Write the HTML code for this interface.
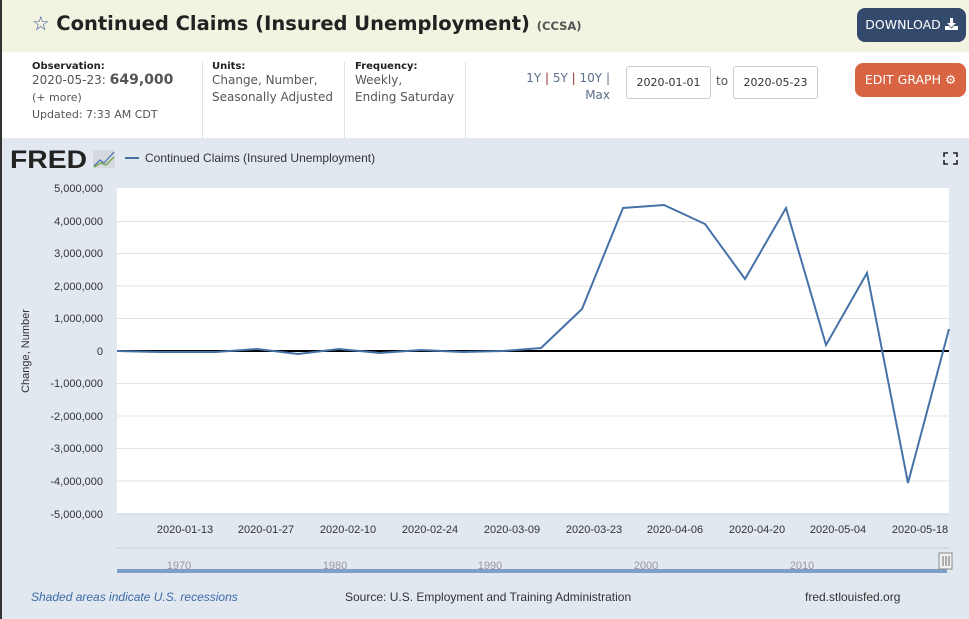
<!DOCTYPE html>
<html><head><meta charset="utf-8"><style>
*{margin:0;padding:0;box-sizing:border-box}
body{width:969px;height:619px;overflow:hidden;font-family:"DejaVu Sans","Liberation Sans",sans-serif;background:#fff;position:relative}
.hdr{position:absolute;left:0;top:0;width:969px;height:52px;background:#f2f3e0;border-left:2px solid #333}
.title{position:absolute;left:30px;top:12px;font-size:19.5px;font-weight:bold;color:#222}
.title small{font-size:11.5px;color:#555}
.btn{position:absolute;color:#fff;font-size:12.5px;border-radius:8px;text-align:center;line-height:34px}
.info{position:absolute;top:52px;left:0;width:969px;height:86px;background:#fff;border-left:2px solid #333}
.lbl{font-size:10px;font-weight:bold;color:#222}
.v{font-size:12px;color:#555;line-height:17px}
.col{position:absolute;top:9px}
.sep{position:absolute;top:10px;width:1px;height:76px;background:#dde4ec}
.inp{position:absolute;top:14px;height:33px;border:1px solid #ccc;border-radius:3px;font-size:11px;color:#333;text-align:center;line-height:31px}
.chart{position:absolute;top:138px;left:0;width:969px;height:481px;background:#e1e8f0;border-left:2px solid #333}
svg text{font-family:"Liberation Sans",sans-serif}
</style></head><body>
<div class="hdr">
<div class="title"><span style="color:#3b5a9a;font-weight:normal">☆</span> Continued Claims (Insured Unemployment) <small>(CCSA)</small></div>
<div class="btn" style="left:855px;top:8px;width:109px;background:#344a6c">DOWNLOAD <svg width="13" height="12" viewBox="0 0 13 12" style="vertical-align:-1px"><path d="M5 0h3v5h3l-4.5 4.5L2 5h3z M0 8h4l2.5 2.5L9 8h4v4H0z" fill="#fff"/></svg></div>
</div>
<div class="info">
<div class="col" style="left:30px"><div class="lbl">Observation:</div><div class="v">2020-05-23: <b style="font-size:14px">649,000</b></div><div class="v" style="font-size:11px">(+ more)</div><div class="v" style="font-size:11px">Updated: 7:33 AM CDT</div></div>
<div class="sep" style="left:200px"></div>
<div class="col" style="left:210px"><div class="lbl">Units:</div><div class="v">Change, Number,<br>Seasonally Adjusted</div></div>
<div class="sep" style="left:342px"></div>
<div class="col" style="left:353px"><div class="lbl">Frequency:</div><div class="v">Weekly,<br>Ending Saturday</div></div>
<div class="sep" style="left:463px"></div>
<div class="v" style="position:absolute;left:500px;top:18px;width:108px;text-align:right;color:#5a6f8a">1Y <span style="color:#933">|</span> 5Y <span style="color:#933">|</span> 10Y |<br>Max</div>
<div class="inp" style="left:624px;width:85px">2020-01-01</div>
<div class="v" style="position:absolute;left:714px;top:21px">to</div>
<div class="inp" style="left:731px;width:85px">2020-05-23</div>
<div class="btn" style="left:853px;top:11px;width:111px;background:#d96443">EDIT GRAPH ⚙</div>
</div>
<div class="chart"></div>
<svg width="969" height="619" style="position:absolute;left:0;top:0">
<text x="10" y="168" font-size="25" font-weight="bold" fill="#222" textLength="77" lengthAdjust="spacingAndGlyphs">FRED</text>
<rect x="93" y="150" width="22" height="18" fill="#d5d9dd"/>
<polyline points="94,166 100,160 104,163 114,152" fill="none" stroke="#4a76b0" stroke-width="1.3"/>
<polyline points="94,167 101,163 106,165 114,157" fill="none" stroke="#79a34a" stroke-width="1.3"/>
<line x1="125" y1="158" x2="139" y2="158" stroke="#4572a7" stroke-width="2"/>
<text x="145" y="162" font-size="12" fill="#333">Continued Claims (Insured Unemployment)</text>
<path d="M944 157v-4h4M953 153h4v4M957 160v4h-4M948 164h-4v-4" fill="none" stroke="#222" stroke-width="1.6"/>
<rect x="117" y="188" width="832" height="326" fill="#fff"/>
<g stroke="#e3e3e3" stroke-width="1">
<line x1="117" x2="949" y1="221.5" y2="221.5"/><line x1="117" x2="949" y1="253.5" y2="253.5"/><line x1="117" x2="949" y1="286" y2="286"/><line x1="117" x2="949" y1="318.5" y2="318.5"/><line x1="117" x2="949" y1="383.5" y2="383.5"/><line x1="117" x2="949" y1="416" y2="416"/><line x1="117" x2="949" y1="448.5" y2="448.5"/><line x1="117" x2="949" y1="481" y2="481"/>
</g>
<line x1="117" x2="949" y1="514" y2="514" stroke="#c8d3e0"/>
<line x1="117" x2="949" y1="351" y2="351" stroke="#000" stroke-width="2"/>
<g font-size="11" fill="#333" text-anchor="end">
<text x="103" y="192">5,000,000</text><text x="103" y="225">4,000,000</text><text x="103" y="257">3,000,000</text><text x="103" y="290">2,000,000</text><text x="103" y="322">1,000,000</text><text x="103" y="355">0</text><text x="103" y="387">-1,000,000</text><text x="103" y="420">-2,000,000</text><text x="103" y="452">-3,000,000</text><text x="103" y="485">-4,000,000</text><text x="103" y="518">-5,000,000</text>
</g>
<text transform="translate(29,351) rotate(-90)" font-size="11" fill="#333" text-anchor="middle">Change, Number</text>
<polyline fill="none" stroke="#4572a7" stroke-width="2" points="117,351 158,352 216,352 257,349 298,354 339,349 380,353 421,350 462,352 503,351 541,348 582,309 623,208 664,205 705,224 745,279 786,208 826,345 867,273 908,483 949,329"/>
<g font-size="11" fill="#333" text-anchor="middle">
<text x="185" y="533">2020-01-13</text><text x="266" y="533">2020-01-27</text><text x="348" y="533">2020-02-10</text><text x="430" y="533">2020-02-24</text><text x="512" y="533">2020-03-09</text><text x="594" y="533">2020-03-23</text><text x="675" y="533">2020-04-06</text><text x="757" y="533">2020-04-20</text><text x="838" y="533">2020-05-04</text><text x="920" y="533">2020-05-18</text>
</g>
<line x1="117" x2="949" y1="548" y2="548" stroke="#ccc"/>
<rect x="117" y="569" width="830" height="4" fill="#7f9fc8"/>
<g font-size="11" fill="#999" text-anchor="middle"><text x="179" y="569">1970</text><text x="335" y="569">1980</text><text x="490" y="569">1990</text><text x="646" y="569">2000</text><text x="802" y="569">2010</text></g>
<rect x="939" y="553" width="13" height="16" fill="#f2f2f2" stroke="#888"/>
<line x1="943" y1="556" x2="943" y2="566" stroke="#666"/><line x1="946" y1="556" x2="946" y2="566" stroke="#666"/><line x1="949" y1="556" x2="949" y2="566" stroke="#666"/>
<text x="31" y="601" font-size="12" fill="#3c6aa8" font-style="italic">Shaded areas indicate U.S. recessions</text>
<text x="345" y="601" font-size="12" fill="#333">Source: U.S. Employment and Training Administration</text>
<text x="805" y="601" font-size="12" fill="#333">fred.stlouisfed.org</text>
</svg>
</body></html>
